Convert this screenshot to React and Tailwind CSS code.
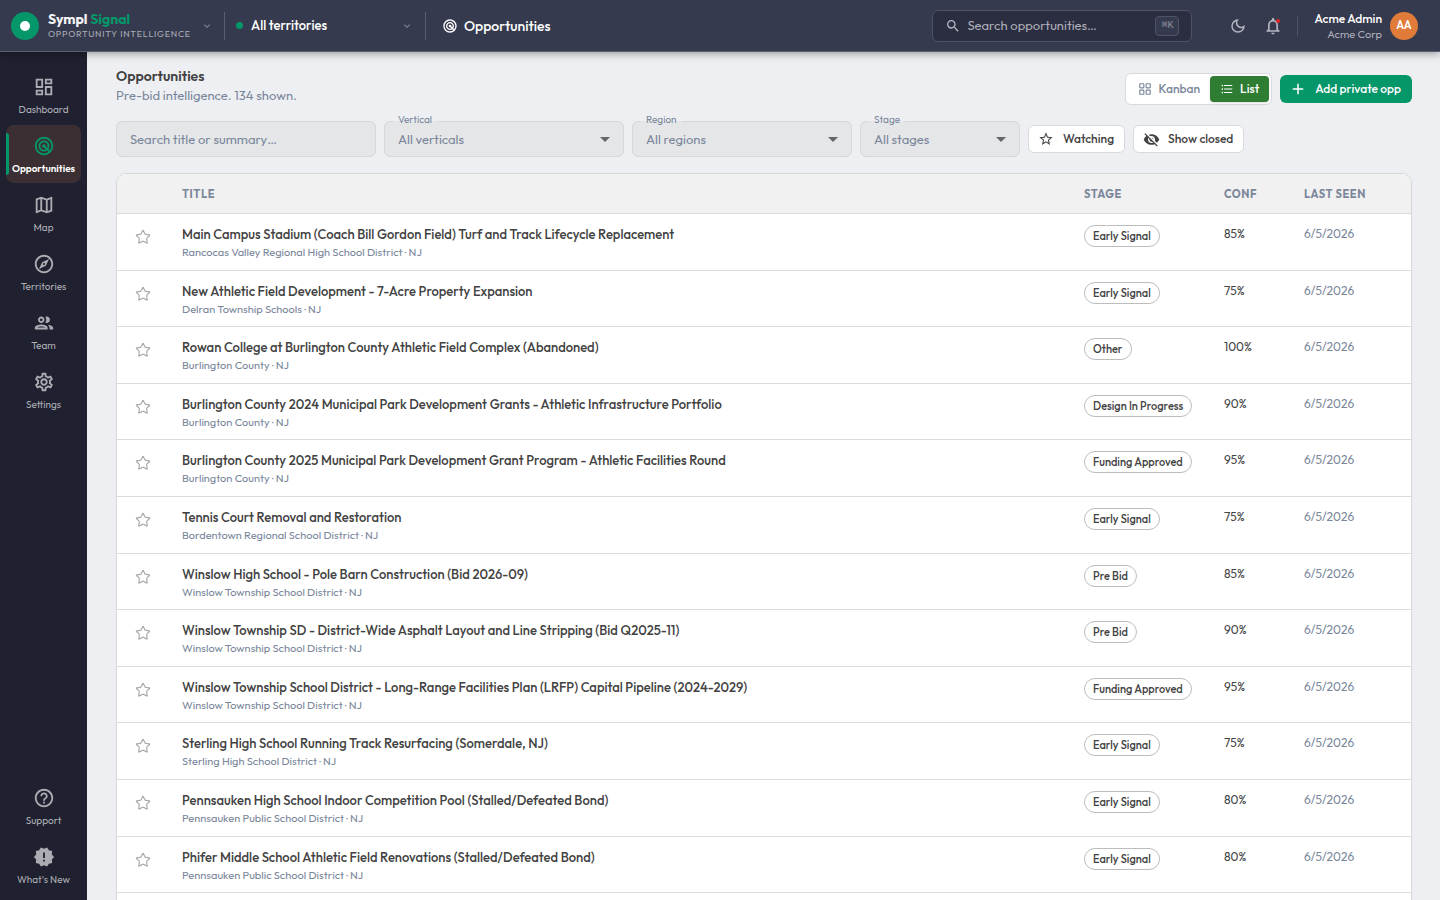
import { useState } from "react";
import { Star, LayoutGrid } from "lucide-react";
import {
  MdAdd,
  MdArrowDropDown,
  MdFormatListBulleted,
  MdHelpOutline,
  MdKeyboardArrowDown,
  MdNewReleases,
  MdNotificationsNone,
  MdOutlineDarkMode,
  MdOutlineDashboard,
  MdOutlineExplore,
  MdOutlineGroup,
  MdOutlineMap,
  MdOutlineSettings,
  MdRadar,
  MdSearch,
  MdStarBorder,
  MdVisibilityOff,
} from "react-icons/md";

const mainNav = [
  { label: "Dashboard", icon: MdOutlineDashboard },
  { label: "Opportunities", icon: MdRadar },
  { label: "Map", icon: MdOutlineMap },
  { label: "Territories", icon: MdOutlineExplore },
  { label: "Team", icon: MdOutlineGroup },
  { label: "Settings", icon: MdOutlineSettings },
];

const footerNav = [
  { label: "Support", icon: MdHelpOutline },
  { label: "What's New", icon: MdNewReleases },
];

const opportunities = [
  { title: "Main Campus Stadium (Coach Bill Gordon Field) Turf and Track Lifecycle Replacement", org: "Rancocas Valley Regional High School District", stage: "Early Signal", conf: 85 },
  { title: "New Athletic Field Development - 7-Acre Property Expansion", org: "Delran Township Schools", stage: "Early Signal", conf: 75 },
  { title: "Rowan College at Burlington County Athletic Field Complex (Abandoned)", org: "Burlington County", stage: "Other", conf: 100 },
  { title: "Burlington County 2024 Municipal Park Development Grants - Athletic Infrastructure Portfolio", org: "Burlington County", stage: "Design In Progress", conf: 90 },
  { title: "Burlington County 2025 Municipal Park Development Grant Program - Athletic Facilities Round", org: "Burlington County", stage: "Funding Approved", conf: 95 },
  { title: "Tennis Court Removal and Restoration", org: "Bordentown Regional School District", stage: "Early Signal", conf: 75 },
  { title: "Winslow High School - Pole Barn Construction (Bid 2026-09)", org: "Winslow Township School District", stage: "Pre Bid", conf: 85 },
  { title: "Winslow Township SD - District-Wide Asphalt Layout and Line Stripping (Bid Q2025-11)", org: "Winslow Township School District", stage: "Pre Bid", conf: 90 },
  { title: "Winslow Township School District - Long-Range Facilities Plan (LRFP) Capital Pipeline (2024-2029)", org: "Winslow Township School District", stage: "Funding Approved", conf: 95 },
  { title: "Sterling High School Running Track Resurfacing (Somerdale, NJ)", org: "Sterling High School District", stage: "Early Signal", conf: 75 },
  { title: "Pennsauken High School Indoor Competition Pool (Stalled/Defeated Bond)", org: "Pennsauken Public School District", stage: "Early Signal", conf: 80 },
  { title: "Phifer Middle School Athletic Field Renovations (Stalled/Defeated Bond)", org: "Pennsauken Public School District", stage: "Early Signal", conf: 80 },
];

function Header() {
  return (
    <header className="relative z-10 flex h-13 shrink-0 items-center border-b border-[#5b5e6e] bg-[#363a4e] pr-[22px] pl-[11px] text-white shadow-[0_2px_8px_rgba(0,0,0,0.35)]">
      <button className="flex w-[202px] items-center text-left">
        <span className="mr-[9px] flex size-7 shrink-0 items-center justify-center rounded-full bg-[#059669]">
          <span className="size-2.5 rounded-full bg-white" />
        </span>
        <span className="flex-1 whitespace-nowrap">
          <span className="block text-sm leading-4 font-bold text-[#f3f4f6]">
            Sympl <span className="text-[#059669]">Signal</span>
          </span>
          <span className="block text-[9px] leading-3.5 tracking-[0.08em] text-[#abadb8]">
            OPPORTUNITY INTELLIGENCE
          </span>
        </span>
        <MdKeyboardArrowDown className="size-3 text-[#85879a]" />
      </button>
      <div className="mx-[11px] h-7 w-px bg-[#5b5e6e]" />
      <button className="flex w-[177px] items-center text-[13px] font-medium">
        <span className="mr-2 size-[7px] rounded-full bg-[#059669]" />
        All territories
        <MdKeyboardArrowDown className="ml-auto size-3 text-[#85879a]" />
      </button>
      <div className="mr-4 ml-3 h-7 w-px bg-[#5b5e6e]" />
      <div className="flex items-center gap-1.5 text-sm font-medium">
        <MdRadar className="size-4" />
        Opportunities
      </div>

      <div className="ml-auto flex h-8 w-[260px] items-center rounded-md border border-[#505366] bg-[#2b2d40] px-3">
        <MdSearch className="mr-1.5 size-4 shrink-0 text-[#b4b6c0]" />
        <input
          type="search"
          aria-label="Search opportunities"
          placeholder="Search opportunities…"
          className="min-w-0 flex-1 bg-transparent text-[13px] outline-none placeholder:text-[#abadb8]"
        />
        <kbd className="rounded border border-[#505366] bg-[#363a4e] px-[5px] py-px font-['Liberation_Mono','DejaVu_Sans_Mono',monospace] text-[10px] leading-4 text-[#8d8f9e]">
          ⌘K
        </kbd>
      </div>
      <button aria-label="Toggle dark mode" className="ml-[37px] text-[#b4b6c0]">
        <MdOutlineDarkMode className="size-[18px]" />
      </button>
      <button aria-label="Notifications" className="relative ml-4 text-[#b4b6c0]">
        <MdNotificationsNone className="size-5" />
        <span className="absolute top-[3px] right-[3px] size-1 rounded-full bg-[#dc2626]" />
      </button>
      <div className="mr-4 ml-3.5 h-5 w-px bg-[#505366]" />
      <button className="flex items-center gap-2 text-right">
        <span>
          <span className="block text-xs leading-4 font-medium">Acme Admin</span>
          <span className="block text-[11px] leading-3.5 text-[#abadb8]">Acme Corp</span>
        </span>
        <span className="flex size-7 items-center justify-center rounded-full bg-[#e07b39] text-[11px] font-semibold">
          AA
        </span>
      </button>
    </header>
  );
}

function NavItem({ item, active }) {
  const Icon = item.icon;
  return (
    <a
      href="#"
      aria-current={active ? "page" : undefined}
      className={`relative flex flex-col items-center gap-[5px] rounded-lg pt-2.5 pb-[7px] text-[10px] leading-3.5 whitespace-nowrap ${
        active ? "bg-[#3b2f33] font-semibold text-white" : "text-[#acadb3]"
      }`}
    >
      {active && <span className="absolute inset-y-2 left-0 w-[3px] rounded-r-sm bg-[#059669]" />}
      <Icon className={active ? "size-[22px] text-[#059669]" : "size-[22px]"} />
      {item.label}
    </a>
  );
}

function Sidebar() {
  return (
    <nav className="flex w-[87px] shrink-0 flex-col gap-px bg-[#1f2130] px-1.5 pt-3.5 pb-1.5">
      {mainNav.map((item) => (
        <NavItem key={item.label} item={item} active={item.label === "Opportunities"} />
      ))}
      <div className="flex-1" />
      {footerNav.map((item) => (
        <NavItem key={item.label} item={item} />
      ))}
    </nav>
  );
}

function FilterSelect({ id, label, option, className }) {
  return (
    <div className={`relative ${className}`}>
      <label
        htmlFor={id}
        className="absolute -top-2 left-[9px] bg-linear-to-b from-[#eeeff3] from-60% to-[#e5e6e8] to-60% px-[5px] text-[10px] leading-3.5 text-[#7a879b]"
      >
        {label}
      </label>
      <select
        id={id}
        className="h-9 w-full appearance-none rounded-md border border-[#d6d7d9] bg-[#e5e6e8] px-[13px] pt-0.5 text-[13px] text-[#7a879b] outline-none"
      >
        <option>{option}</option>
      </select>
      <MdArrowDropDown className="pointer-events-none absolute top-1.5 right-[7px] size-6 text-[#666]" />
    </div>
  );
}

function OpportunityRow({ item }) {
  return (
    <tr className="h-[57px] border-b border-[#dcdcdc] align-top nth-[5n+2]:h-14 nth-[5n+4]:h-14">
      <td className="pt-[15px] pl-[18px]">
        <button aria-label={`Watch ${item.title}`} className="block text-[#aaa]">
          <Star className="size-4" strokeWidth={1.75} />
        </button>
      </td>
      <td className="px-4 pt-2.5">
        <div className="truncate text-[13px] leading-5 font-medium text-[#424242]">{item.title}</div>
        <div className="text-[11px] leading-4 text-[#7a879b]">{item.org} · NJ</div>
      </td>
      <td className="px-4 pt-[11px]">
        <span className="block w-fit rounded-full border border-[#bdbdbd] px-2 text-[11px] leading-5 font-medium whitespace-nowrap text-[#424242]">
          {item.stage}
        </span>
      </td>
      <td className="px-4 pt-2.5 text-xs leading-5 text-[#424242]">{item.conf}%</td>
      <td className="px-4 pt-2.5 text-xs leading-5 text-[#7a879b]">6/5/2026</td>
    </tr>
  );
}

export default function App() {
  const [view, setView] = useState("list");

  return (
    <div className="flex h-screen flex-col bg-[#eeeff3] font-[Outfit,Lato,sans-serif]">
      <Header />
      <div className="flex min-h-0 flex-1">
        <Sidebar />
        <main className="flex min-w-0 flex-1 flex-col gap-4 overflow-y-auto pt-3.5 pr-7 pl-[29px] [scrollbar-width:none]">
          <div className="flex shrink-0 items-end justify-between">
            <div>
              <h1 className="text-sm leading-5 font-semibold text-[#424242]">Opportunities</h1>
              <p className="text-[13px] leading-[19px] text-[#7a879b]">Pre-bid intelligence. 134 shown.</p>
            </div>
            <div className="flex items-center gap-2 text-xs font-medium">
              <div className="flex h-8 items-center rounded-md border border-[#d9dadd] bg-white p-0.5">
                <button
                  onClick={() => setView("kanban")}
                  className={`flex h-[26px] items-center gap-1.5 rounded px-2.5 ${
                    view === "kanban" ? "bg-[#2e7d32] text-white shadow" : "text-[#7a879b]"
                  }`}
                >
                  <LayoutGrid className="size-3.5" />
                  Kanban
                </button>
                <button
                  onClick={() => setView("list")}
                  className={`flex h-[26px] items-center gap-1.5 rounded px-2.5 ${
                    view === "list" ? "bg-[#2e7d32] text-white shadow" : "text-[#7a879b]"
                  }`}
                >
                  <MdFormatListBulleted className="size-3.5" />
                  List
                </button>
              </div>
              <button className="flex h-7 items-center gap-2 rounded-md bg-[#059669] pr-[11px] pl-[9px] text-white">
                <MdAdd className="size-[18px]" />
                Add private opp
              </button>
            </div>
          </div>

          <div className="flex shrink-0 items-center gap-2">
            <input
              type="text"
              aria-label="Search title or summary"
              placeholder="Search title or summary…"
              className="h-9 w-[260px] rounded-md border border-[#d6d7d9] bg-[#e5e6e8] px-[13px] text-[13px] outline-none placeholder:text-[#7a879b]"
            />
            <FilterSelect id="vertical" label="Vertical" option="All verticals" className="w-60" />
            <FilterSelect id="region" label="Region" option="All regions" className="w-55" />
            <FilterSelect id="stage" label="Stage" option="All stages" className="w-40" />
            <button className="flex h-7 items-center gap-[9px] rounded-md border border-[#d9dadd] bg-white pr-2.5 pl-[9px] text-xs font-medium text-[#424242]">
              <MdStarBorder className="size-4" />
              Watching
            </button>
            <button className="flex h-7 items-center gap-2 rounded-md border border-[#d9dadd] bg-white pr-2.5 pl-[9px] text-xs font-medium text-[#424242]">
              <MdVisibilityOff className="size-[17px]" />
              Show closed
            </button>
          </div>

          <div className="shrink-0 overflow-hidden rounded-t-[10px] border border-[#d6d7d9] bg-white pb-14">
            <table className="w-full table-fixed border-collapse text-left">
              <thead>
                <tr className="h-[39px] border-b border-[#dcdcdc] bg-[#f1f1f1] text-[11px] tracking-wider text-[#7a879b]">
                  <th className="w-[49px]" aria-label="Watch" />
                  <th className="px-4 pt-0.5 font-bold">TITLE</th>
                  <th className="w-35 px-4 pt-0.5 font-bold">STAGE</th>
                  <th className="w-20 px-4 pt-0.5 font-bold">CONF</th>
                  <th className="w-[123px] px-4 pt-0.5 font-bold">LAST SEEN</th>
                </tr>
              </thead>
              <tbody>
                {opportunities.map((item) => (
                  <OpportunityRow key={item.title} item={item} />
                ))}
              </tbody>
            </table>
          </div>
        </main>
      </div>
    </div>
  );
}
